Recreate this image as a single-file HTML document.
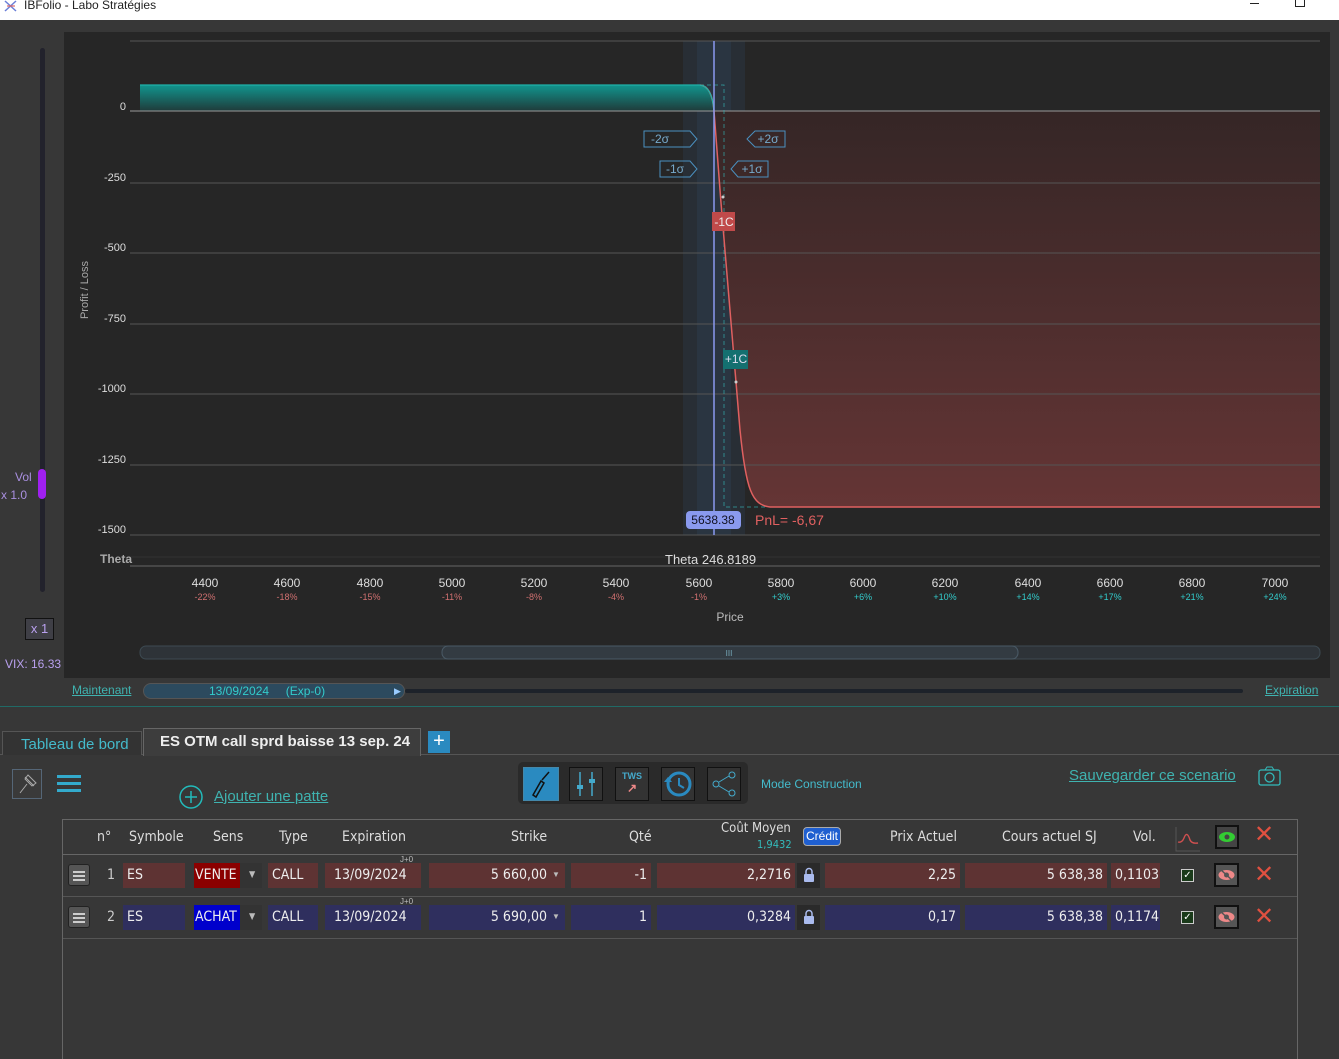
<!DOCTYPE html>
<html><head><meta charset="utf-8"><style>
*{margin:0;padding:0;box-sizing:border-box}
body{width:1339px;height:1047px;overflow:hidden;background:#373737;font-family:"Liberation Sans",sans-serif;position:relative;color:#ddd}
.a{position:absolute;white-space:nowrap}
.cell{position:absolute;height:25px;line-height:25px;font-size:14px;color:#eee;padding:0 4px;font-family:"DejaVu Sans Condensed","Liberation Sans",sans-serif;overflow:hidden}
.r{background:#5e3333}.b{background:#2f2f5e}
.h{position:absolute;font-size:14px;color:#ddd;font-family:"DejaVu Sans Condensed","Liberation Sans",sans-serif}
.link{color:#3fb3b0;text-decoration:underline}
</style></head><body>
<div class="a" style="left:0;top:0;width:1339px;height:20px;background:#fff"></div>
<svg class="a" style="left:3px;top:0" width="16" height="12"><path d="M2 1 L13 11 M13 1 L2 11" stroke="#6a7fd8" stroke-width="1.5"/><path d="M4 6 H12" stroke="#d66" stroke-width="1.2"/></svg>
<div class="a" style="left:24px;top:-2px;font-size:12px;color:#222">IBFolio - Labo Stratégies</div>
<div class="a" style="left:1250px;top:3px;width:9px;height:1px;background:#222"></div>
<div class="a" style="left:1295px;top:-3px;width:10px;height:10px;border:1px solid #222"></div>

<div class="a" style="left:40px;top:48px;width:5px;height:544px;background:#22222c;border-radius:3px"></div>
<div class="a" style="left:38px;top:469px;width:8px;height:30px;background:#a020f0;border-radius:4px"></div>
<div class="a" style="left:15px;top:470px;font-size:12px;color:#a98fe0">Vol</div>
<div class="a" style="left:1px;top:488px;font-size:12px;color:#a98fe0">x 1.0</div>
<div class="a" style="left:25px;top:618px;width:29px;height:22px;border:1px solid #111;background:#3f3f46;color:#b9a0ef;font-size:13px;text-align:center;line-height:20px">x 1</div>
<div class="a" style="left:5px;top:657px;font-size:12px;color:#b9a0ef">VIX: 16.33</div>

<div class="a" style="left:64px;top:32px;width:1266px;height:646px;background:#262626"></div>
<svg class="a" style="left:0;top:0" width="1339" height="700">
<defs>
<linearGradient id="g" x1="0" y1="0" x2="0" y2="1"><stop offset="0" stop-color="#11958e"/><stop offset="1" stop-color="#1f3b3a"/></linearGradient>
<linearGradient id="rd" x1="0" y1="0" x2="0" y2="1"><stop offset="0" stop-color="#352626"/><stop offset="1" stop-color="#653535"/></linearGradient>
</defs>
<rect x="683" y="41" width="62" height="494" fill="#2a3440" opacity=".6"/>
<rect x="697" y="41" width="34" height="494" fill="#2c3a4a" opacity=".6"/>
<path d="M140 85 H700 Q712 86 714 111 H140 Z" fill="url(#g)"/>
<path d="M714 111 C722 220 732 340 740 430 C746 490 752 505 770 507 H1320 V111 Z" fill="url(#rd)"/>
<g stroke="#555" stroke-width="1">
<line x1="130" y1="41" x2="1320" y2="41"/><line x1="130" y1="183" x2="1320" y2="183"/><line x1="130" y1="253" x2="1320" y2="253"/><line x1="130" y1="324" x2="1320" y2="324"/><line x1="130" y1="394" x2="1320" y2="394"/><line x1="130" y1="465" x2="1320" y2="465"/><line x1="130" y1="535" x2="1320" y2="535"/>
<line x1="130" y1="557" x2="1320" y2="557" stroke="#333"/><line x1="130" y1="566" x2="1320" y2="566" stroke="#666"/>
</g>
<line x1="130" y1="111" x2="1320" y2="111" stroke="#999"/>
<path d="M140 85 H724 V507 H1320" fill="none" stroke="#3aa" stroke-dasharray="4 3" opacity=".7"/>
<path d="M700 85 Q712 86 714 111 C722 220 732 340 740 430 C746 490 752 505 770 507 H1320" fill="none" stroke="#e06060" stroke-width="1.5"/>
<path d="M140 85 H700 Q712 86 714 111" fill="none" stroke="#20b0a8" stroke-width="1.2"/>
<line x1="714" y1="41" x2="714" y2="535" stroke="#8a9aef" stroke-width="1.5"/>
<g font-family="Liberation Sans" font-size="11" fill="#ddd" text-anchor="end">
<text x="126" y="110">0</text><text x="126" y="181">-250</text><text x="126" y="251">-500</text><text x="126" y="322">-750</text><text x="126" y="392">-1000</text><text x="126" y="463">-1250</text><text x="126" y="533">-1500</text>
</g>
<text x="88" y="290" transform="rotate(-90 88 290)" font-size="11" fill="#aaa" text-anchor="middle">Profit / Loss</text>
<text x="100" y="563" font-size="12" fill="#aaa" font-weight="bold">Theta</text>
<text x="665" y="564" font-size="13" fill="#ddd">Theta 246.8189</text>
<g font-size="12" fill="#ddd" text-anchor="middle">
<text x="205" y="587">4400</text><text x="287" y="587">4600</text><text x="370" y="587">4800</text><text x="452" y="587">5000</text><text x="534" y="587">5200</text><text x="616" y="587">5400</text><text x="699" y="587">5600</text><text x="781" y="587">5800</text><text x="863" y="587">6000</text><text x="945" y="587">6200</text><text x="1028" y="587">6400</text><text x="1110" y="587">6600</text><text x="1192" y="587">6800</text><text x="1275" y="587">7000</text>
</g>
<g font-size="9" text-anchor="middle" fill="#d07070">
<text x="205" y="600">-22%</text><text x="287" y="600">-18%</text><text x="370" y="600">-15%</text><text x="452" y="600">-11%</text><text x="534" y="600">-8%</text><text x="616" y="600">-4%</text><text x="699" y="600">-1%</text>
</g>
<g font-size="9" text-anchor="middle" fill="#3cc">
<text x="781" y="600">+3%</text><text x="863" y="600">+6%</text><text x="945" y="600">+10%</text><text x="1028" y="600">+14%</text><text x="1110" y="600">+17%</text><text x="1192" y="600">+21%</text><text x="1275" y="600">+24%</text>
</g>
<text x="730" y="621" font-size="12" fill="#bbb" text-anchor="middle">Price</text>
<rect x="140" y="646" width="1180" height="13" rx="6" fill="#2e3338" stroke="#3d4a52"/>
<rect x="442" y="646" width="576" height="13" rx="6" fill="#333b42" stroke="#4a5a66"/>
<text x="729" y="656" font-size="8" fill="#7ab" text-anchor="middle">III</text>
<g fill="none" stroke="#4a90c0"><path d="M644 131 H690 L697 139 L690 147 H644 Z"/><path d="M660 161 H690 L697 169 L690 177 H660 Z"/><path d="M785 131 H755 L747 139 L755 147 H785 Z"/><path d="M768 161 H738 L731 169 L738 177 H768 Z"/></g>
<g font-size="12" fill="#7ac" text-anchor="middle"><text x="660" y="143">-2σ</text><text x="675" y="173">-1σ</text><text x="768" y="143">+2σ</text><text x="752" y="173">+1σ</text></g>
<rect x="712" y="212" width="23" height="19" fill="#c04a4a"/><text x="724" y="226" font-size="12" fill="#eee" text-anchor="middle">-1C</text>
<rect x="723" y="350" width="25" height="19" fill="#147070"/><text x="736" y="363" font-size="12" fill="#dde" text-anchor="middle">+1C</text>
<circle cx="723" cy="197" r="1.5" fill="#ccc"/><circle cx="736" cy="382" r="1.5" fill="#ccc"/>
<rect x="686" y="511" width="55" height="18" rx="4" fill="#8a9aef"/><text x="713" y="524" font-size="12" fill="#112" text-anchor="middle">5638.38</text>
<text x="755" y="525" font-size="14" fill="#e06060">PnL= -6,67</text>
</svg>

<div class="a link" style="left:72px;top:683px;font-size:12px">Maintenant</div>
<div class="a" style="left:143px;top:683px;width:262px;height:16px;border-radius:8px;background:#2c4a5e;border:1px solid #555;color:#3cc;font-size:12px;line-height:14px;padding-left:65px">13/09/2024 &nbsp; &nbsp; (Exp-0) <span style="position:absolute;left:250px;color:#9cf;font-size:9px">▶</span></div>
<div class="a" style="left:405px;top:689px;width:838px;height:4px;background:#1d222a;border-radius:2px"></div>
<div class="a link" style="left:1265px;top:683px;font-size:12px">Expiration</div>
<div class="a" style="left:0;top:706px;width:1339px;height:1px;background:#206a66"></div>

<div class="a" style="left:0;top:729px;width:1339px;height:26px;border-bottom:1px solid #555"></div>
<div class="a" style="left:2px;top:731px;width:140px;height:24px;background:#333;border:1px solid #555;border-bottom:none;color:#4bc;font-size:15px;line-height:26px;padding-left:18px">Tableau de bord</div>
<div class="a" style="left:143px;top:728px;width:278px;height:28px;background:#3d3d3d;border:1px solid #666;border-bottom:none;color:#eee;font-size:15px;font-weight:bold;line-height:26px;padding-left:16px">ES OTM call sprd baisse 13 sep. 24</div>
<div class="a" style="left:428px;top:731px;width:22px;height:22px;background:#2a8ac0;color:#fff;font-size:20px;text-align:center;line-height:21px">+</div>

<div class="a" style="left:12px;top:769px;width:30px;height:30px;border:1px solid #567;background:#3a3a3a"></div>
<svg class="a" style="left:12px;top:769px" width="30" height="30"><path d="M8 24 L15 15 M13 8 L22 17 M16 6 L24 14 L20 17 L13 10 Z" stroke="#aaa" fill="none"/></svg>
<div class="a" style="left:57px;top:775px;width:24px;height:3px;background:#3ac;box-shadow:0 7px 0 #3ac,0 14px 0 #3ac"></div>
<svg class="a" style="left:178px;top:784px" width="26" height="26"><circle cx="13" cy="13" r="11" stroke="#2bb" stroke-width="1.5" fill="none"/><path d="M13 7V19M7 13H19" stroke="#2bb" stroke-width="1.5"/></svg>
<div class="a link" style="left:214px;top:788px;font-size:15px">Ajouter une patte</div>
<div class="a" style="left:518px;top:762px;width:230px;height:42px;background:#2a2a2a;border-radius:5px"></div>
<div class="a" style="left:523px;top:767px;width:36px;height:34px;background:#2a8ac0;border:1px solid #48a"></div>
<svg class="a" style="left:523px;top:767px" width="36" height="34"><path d="M10 28 L18 14 L21 16 L13 30 Z M19 13 L26 5" stroke="#111" fill="none" stroke-width="1.5"/></svg>
<div class="a" style="left:569px;top:767px;width:34px;height:34px;background:#333;border:1px solid #111"></div>
<svg class="a" style="left:569px;top:767px" width="34" height="34"><path d="M11 5V29M23 5V29" stroke="#4ac" stroke-width="1.5"/><rect x="8" y="18" width="6" height="4" fill="#4ac"/><rect x="20" y="12" width="6" height="4" fill="#4ac"/></svg>
<div class="a" style="left:615px;top:767px;width:34px;height:34px;background:#333;border:1px solid #111;color:#4ac;font-size:9px;font-weight:bold;text-align:center;padding-top:3px">TWS<br><span style="color:#e88;font-size:12px">↗</span></div>
<div class="a" style="left:661px;top:767px;width:34px;height:34px;background:#333;border:1px solid #111"></div>
<svg class="a" style="left:661px;top:767px" width="34" height="34"><circle cx="18" cy="17" r="11" stroke="#2a8ac0" stroke-width="3" fill="none"/><path d="M18 11V18L23 21" stroke="#2a8ac0" stroke-width="2" fill="none"/><path d="M3 15L7 10L11 15Z" fill="#2a8ac0"/></svg>
<div class="a" style="left:707px;top:767px;width:34px;height:34px;background:#333;border:1px solid #111"></div>
<svg class="a" style="left:707px;top:767px" width="34" height="34"><circle cx="9" cy="17" r="3" stroke="#4ac" fill="none"/><circle cx="25" cy="8" r="3" stroke="#4ac" fill="none"/><circle cx="25" cy="26" r="3" stroke="#4ac" fill="none"/><path d="M12 15L22 9M12 19L22 25" stroke="#4ac"/></svg>
<div class="a" style="left:761px;top:777px;font-size:12px;color:#4bc">Mode Construction</div>
<div class="a link" style="left:1069px;top:767px;font-size:15px">Sauvegarder ce scenario</div>
<svg class="a" style="left:1257px;top:765px" width="26" height="22"><rect x="2" y="5" width="21" height="15" rx="2" stroke="#3bb" fill="none" stroke-width="1.3"/><circle cx="12.5" cy="12.5" r="4.5" stroke="#3bb" fill="none" stroke-width="1.3"/><path d="M8 5L10 2H15L17 5" stroke="#3bb" fill="none"/></svg>

<div class="a" style="left:62px;top:819px;width:1236px;height:240px;border:1px solid #666;border-bottom:none"></div>
<div class="a" style="left:63px;top:854px;width:1234px;height:1px;background:#666"></div>
<div class="a" style="left:63px;top:896px;width:1234px;height:1px;background:#555"></div>
<div class="a" style="left:63px;top:938px;width:1234px;height:1px;background:#555"></div>
<div class="h" style="left:97px;top:829px">n°</div>
<div class="h" style="left:129px;top:829px">Symbole</div>
<div class="h" style="left:213px;top:829px">Sens</div>
<div class="h" style="left:279px;top:829px">Type</div>
<div class="h" style="left:342px;top:829px">Expiration</div>
<div class="h" style="left:511px;top:829px">Strike</div>
<div class="h" style="left:629px;top:829px">Qté</div>
<div class="h" style="left:721px;top:821px;font-size:13px">Coût Moyen</div>
<div class="h" style="left:757px;top:838px;font-size:11px;color:#3bb">1,9432</div>
<div class="a" style="left:803px;top:827px;width:38px;height:19px;background:#1f5fd0;border:1px solid #aaa;border-radius:4px;color:#fff;font-size:12px;text-align:center;line-height:17px">Crédit</div>
<div class="h" style="left:890px;top:829px">Prix Actuel</div>
<div class="h" style="left:1002px;top:829px">Cours actuel SJ</div>
<div class="h" style="left:1133px;top:829px">Vol.</div>
<svg class="a" style="left:1175px;top:826px" width="26" height="26"><path d="M1 1V25H25" stroke="#555" fill="none"/><path d="M3 16Q7 17 9 12Q12 4 15 14Q17 18 23 17" stroke="#d05050" fill="none" stroke-width="1.4"/></svg>
<div class="a" style="left:1215px;top:825px;width:24px;height:24px;background:#444;border:2px solid #111"></div>
<svg class="a" style="left:1217px;top:827px" width="20" height="20"><ellipse cx="10" cy="10" rx="8" ry="5" fill="#3c3"/><circle cx="10" cy="10" r="2.5" fill="#444"/></svg>
<div class="a" style="left:1254px;top:820px;font-size:24px;color:#e05040">✕</div>

<div class="a" style="left:68px;top:864px;width:22px;height:22px;background:#555;border:1px solid #222;border-radius:3px"></div>
<div class="a" style="left:73px;top:871px;width:12px;height:2px;background:#ccc;box-shadow:0 4px 0 #ccc,0 8px 0 #ccc"></div>
<div class="cell" style="left:103px;top:863px;color:#ccc">1</div>
<div class="cell r" style="left:123px;top:863px;width:62px">ES</div>
<div class="cell" style="left:194px;top:863px;width:46px;background:#8b0000;padding:0 1px">VENTE</div>
<div class="cell" style="left:240px;top:863px;width:22px;background:#333;font-size:9px;color:#bbb;padding-left:9px">▼</div>
<div class="cell r" style="left:268px;top:863px;width:50px">CALL</div>
<div class="cell r" style="left:325px;top:863px;width:96px;padding-left:9px">13/09/2024</div>
<div class="a" style="left:400px;top:855px;font-size:8px;color:#bbb">J+0</div>
<div class="cell r" style="left:429px;top:863px;width:136px;text-align:right;padding-right:18px">5 660,00</div>
<div class="a" style="left:552px;top:870px;font-size:8px;color:#bbb">▼</div>
<div class="cell r" style="left:571px;top:863px;width:80px;text-align:right">-1</div>
<div class="cell r" style="left:657px;top:863px;width:138px;text-align:right">2,2716</div>
<div class="a" style="left:797px;top:863px;width:23px;height:25px;background:#2a2a2a"></div>
<svg class="a" style="left:803px;top:867px" width="12" height="16"><path d="M3 7V4.5a3 3 0 0 1 6 0V7" stroke="#abe" fill="none" stroke-width="1.5"/><rect x="1" y="7" width="10" height="8" rx="1" fill="#abe"/></svg>
<div class="cell r" style="left:825px;top:863px;width:135px;text-align:right">2,25</div>
<div class="cell r" style="left:965px;top:863px;width:142px;text-align:right">5 638,38</div>
<div class="cell r" style="left:1111px;top:863px;width:49px;text-align:right">0,1103</div>
<div class="a" style="left:1181px;top:869px;width:13px;height:13px;background:#1a3a1a;border:1px solid #ccc;color:#fff;font-size:10px;line-height:11px;text-align:center">✓</div>
<div class="a" style="left:1214px;top:863px;width:25px;height:24px;background:#555;border:2px solid #111"></div>
<svg class="a" style="left:1216px;top:865px" width="21" height="20"><ellipse cx="10.5" cy="10" rx="8" ry="5" fill="#e88"/><circle cx="10.5" cy="10" r="2.5" fill="#555"/><path d="M4 4L17 16" stroke="#555" stroke-width="1.5"/></svg>
<div class="a" style="left:1254px;top:860px;font-size:24px;color:#e05040">✕</div>

<div class="a" style="left:68px;top:906px;width:22px;height:22px;background:#555;border:1px solid #222;border-radius:3px"></div>
<div class="a" style="left:73px;top:913px;width:12px;height:2px;background:#ccc;box-shadow:0 4px 0 #ccc,0 8px 0 #ccc"></div>
<div class="cell" style="left:103px;top:905px;color:#ccc">2</div>
<div class="cell b" style="left:123px;top:905px;width:62px">ES</div>
<div class="cell" style="left:194px;top:905px;width:46px;background:#0000cc;padding:0 1px">ACHAT</div>
<div class="cell" style="left:240px;top:905px;width:22px;background:#333;font-size:9px;color:#bbb;padding-left:9px">▼</div>
<div class="cell b" style="left:268px;top:905px;width:50px">CALL</div>
<div class="cell b" style="left:325px;top:905px;width:96px;padding-left:9px">13/09/2024</div>
<div class="a" style="left:400px;top:897px;font-size:8px;color:#bbb">J+0</div>
<div class="cell b" style="left:429px;top:905px;width:136px;text-align:right;padding-right:18px">5 690,00</div>
<div class="a" style="left:552px;top:912px;font-size:8px;color:#bbb">▼</div>
<div class="cell b" style="left:571px;top:905px;width:80px;text-align:right">1</div>
<div class="cell b" style="left:657px;top:905px;width:138px;text-align:right">0,3284</div>
<div class="a" style="left:797px;top:905px;width:23px;height:25px;background:#2a2a2a"></div>
<svg class="a" style="left:803px;top:909px" width="12" height="16"><path d="M3 7V4.5a3 3 0 0 1 6 0V7" stroke="#abe" fill="none" stroke-width="1.5"/><rect x="1" y="7" width="10" height="8" rx="1" fill="#abe"/></svg>
<div class="cell b" style="left:825px;top:905px;width:135px;text-align:right">0,17</div>
<div class="cell b" style="left:965px;top:905px;width:142px;text-align:right">5 638,38</div>
<div class="cell b" style="left:1111px;top:905px;width:49px;text-align:right">0,1174</div>
<div class="a" style="left:1181px;top:911px;width:13px;height:13px;background:#1a3a1a;border:1px solid #ccc;color:#fff;font-size:10px;line-height:11px;text-align:center">✓</div>
<div class="a" style="left:1214px;top:905px;width:25px;height:24px;background:#555;border:2px solid #111"></div>
<svg class="a" style="left:1216px;top:907px" width="21" height="20"><ellipse cx="10.5" cy="10" rx="8" ry="5" fill="#e88"/><circle cx="10.5" cy="10" r="2.5" fill="#555"/><path d="M4 4L17 16" stroke="#555" stroke-width="1.5"/></svg>
<div class="a" style="left:1254px;top:902px;font-size:24px;color:#e05040">✕</div>
</body></html>
